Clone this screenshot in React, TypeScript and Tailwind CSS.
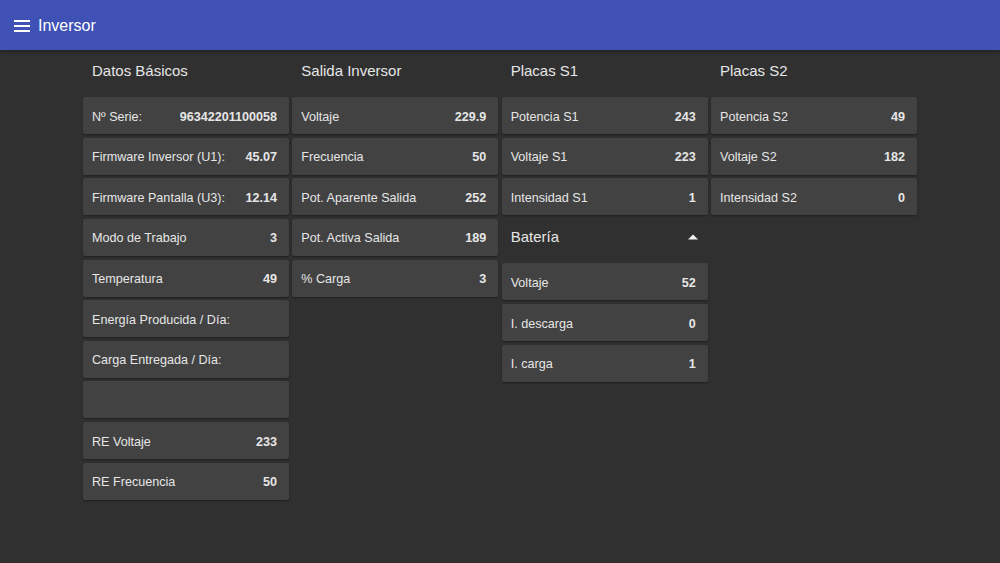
import React from "react";

type Row = { label: string; value?: string };

function Card({ label, value }: Row) {
  return (
    <div className="h-[37px] mb-[3.65px] bg-[#424242] rounded-[2px] shadow-[0_1px_2px_rgba(0,0,0,0.35)] flex items-center justify-between pl-[9px] pr-[12px] pt-[3px] text-[12.6px] text-[#e6e6e6]">
      <span>{label}</span>
      {value !== undefined && <span className="font-bold">{value}</span>}
    </div>
  );
}

function Header({ title, caret }: { title: string; caret?: boolean }) {
  return (
    <div className="h-[44.4px] flex items-center justify-between pl-[9px] pr-[10px] pb-[8px] text-[15px] text-[#e6e6e6]">
      <span>{title}</span>
      {caret && (
        <svg width="10" height="6" viewBox="0 0 10 6">
          <path d="M0 5.5 L5 0.5 L10 5.5 Z" fill="#f0f0f0" />
        </svg>
      )}
    </div>
  );
}

function Column({ title, rows, extra }: { title: string; rows: Row[]; extra?: React.ReactNode }) {
  return (
    <div className="flex flex-col">
      <div className="h-[47px] flex items-center pl-[9px] pb-[4px] text-[15px] text-[#e6e6e6]">{title}</div>
      {rows.map((r, i) => (
        <Card key={i} {...r} />
      ))}
      {extra}
    </div>
  );
}

export default function App() {
  return (
    <div className="w-[1000px] h-[563px] bg-[#303030] font-[family-name:'Liberation_Sans',Arial,sans-serif] overflow-hidden">
      <div className="h-[50px] bg-[#3f51b5] flex items-center pl-[14px] pt-[1px] shadow-[0_2px_4px_rgba(0,0,0,0.3)]">
        <svg width="16" height="12" viewBox="0 0 16 12" className="mr-[8px]">
          <rect x="0" y="0" width="16" height="2" fill="#fff" />
          <rect x="0" y="5" width="16" height="2" fill="#fff" />
          <rect x="0" y="10" width="16" height="2" fill="#fff" />
        </svg>
        <span className="text-white text-[16px]">Inversor</span>
      </div>
      <div className="w-[834px] mx-auto grid grid-cols-[206px_206px_206px_206px] gap-x-[3.33px]">
        <Column
          title="Datos Básicos"
          rows={[
            { label: "Nº Serie:", value: "96342201100058" },
            { label: "Firmware Inversor (U1):", value: "45.07" },
            { label: "Firmware Pantalla (U3):", value: "12.14" },
            { label: "Modo de Trabajo", value: "3" },
            { label: "Temperatura", value: "49" },
            { label: "Energía Producida / Día:" },
            { label: "Carga Entregada / Día:" },
            { label: "" },
            { label: "RE Voltaje", value: "233" },
            { label: "RE Frecuencia", value: "50" },
          ]}
        />
        <Column
          title="Salida Inversor"
          rows={[
            { label: "Voltaje", value: "229.9" },
            { label: "Frecuencia", value: "50" },
            { label: "Pot. Aparente Salida", value: "252" },
            { label: "Pot. Activa Salida", value: "189" },
            { label: "% Carga", value: "3" },
          ]}
        />
        <Column
          title="Placas S1"
          rows={[
            { label: "Potencia S1", value: "243" },
            { label: "Voltaje S1", value: "223" },
            { label: "Intensidad S1", value: "1" },
          ]}
          extra={
            <>
              <Header title="Batería" caret />
              <Card label="Voltaje" value="52" />
              <Card label="I. descarga" value="0" />
              <Card label="I. carga" value="1" />
            </>
          }
        />
        <Column
          title="Placas S2"
          rows={[
            { label: "Potencia S2", value: "49" },
            { label: "Voltaje S2", value: "182" },
            { label: "Intensidad S2", value: "0" },
          ]}
        />
      </div>
    </div>
  );
}
